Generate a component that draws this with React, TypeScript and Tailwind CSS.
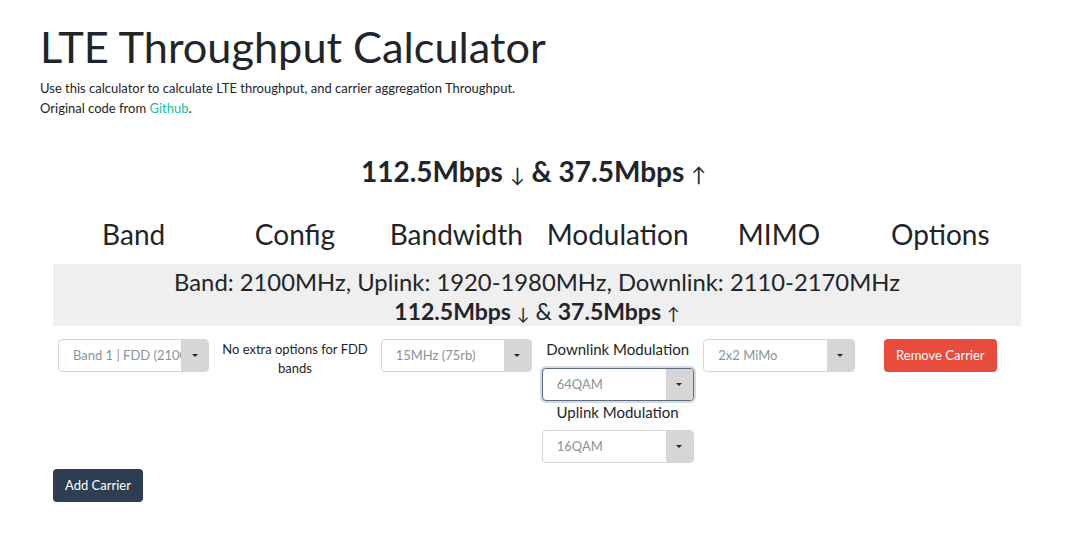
import React from "react";

function Select({ value, focus }: { value: string; focus?: boolean }) {
  return (
    <div
      className={
        "flex h-[33px] w-full overflow-hidden rounded-[4px] border bg-white " +
        (focus
          ? "border-[#5b6b7c] shadow-[0_0_0_2px_rgba(130,150,175,0.35)]"
          : "border-[#d5d5d5]")
      }
    >
      <div className="flex flex-1 items-center overflow-hidden whitespace-nowrap pl-[14px] text-[13px] text-[#8a9396]">
        {value}
      </div>
      <div className="flex w-[27px] shrink-0 items-center justify-center bg-[#d6d6d6]">
        <div className="h-0 w-0 border-x-[3px] border-t-[3px] border-x-transparent border-t-[#222]" />
      </div>
    </div>
  );
}

function Arrow({ c, size }: { c: string; size: string }) {
  return <span className={"font-normal " + size}>{c}</span>;
}

export default function App() {
  return (
    <div className="min-h-[536px] bg-white font-['Lato','Noto_Sans',sans-serif] text-[#212529]">
      <div className="px-[40px] pt-[20px]">
        <h1 className="text-[43.3px] leading-[52px] font-normal">LTE Throughput Calculator</h1>
        <p className="mt-[6px] text-[13px] leading-[20px]">
          Use this calculator to calculate LTE throughput, and carrier aggregation Throughput.
          <br />
          Original code from <span className="text-[#18bc9c]">Github</span>.
        </p>
      </div>
      <div className="mt-[36px] text-center text-[28px] font-bold leading-[34px]">
        112.5Mbps <Arrow c="↓" size="text-[20px]" /> &amp; 37.5Mbps <Arrow c="↑" size="text-[20px]" />
      </div>
      <div className="mx-[53px] mt-[25px] w-[968px]">
        <div className="grid grid-cols-6 text-center text-[28px] leading-[36px]">
          <div>Band</div>
          <div>Config</div>
          <div>Bandwidth</div>
          <div>Modulation</div>
          <div>MIMO</div>
          <div>Options</div>
        </div>
        <div className="mt-[12px] h-[62px] bg-[#efefef] pt-[4px] text-center text-[23.8px] leading-[29px]">
          <div>Band: 2100MHz, Uplink: 1920-1980MHz, Downlink: 2110-2170MHz</div>
          <div className="text-[23px]">
            <span className="font-bold">112.5Mbps</span> <Arrow c="↓" size="text-[17px]" /> &amp;{" "}
            <span className="font-bold">37.5Mbps</span> <Arrow c="↑" size="text-[17px]" />
          </div>
        </div>
        <div className="grid grid-cols-6 pt-[13px]">
          <div className="px-[5px]">
            <Select value="Band 1 | FDD (2100MHz)" />
          </div>
          <div className="pt-[1px] text-center text-[13px] leading-[19px]">
            No extra options for FDD bands
          </div>
          <div className="px-[5px]">
            <Select value="15MHz (75rb)" />
          </div>
          <div className="flex flex-col items-center px-[5px]">
            <div className="text-[15px] leading-[20px]">Downlink Modulation</div>
            <div className="mt-[9px] w-[152px]">
              <Select value="64QAM" focus />
            </div>
            <div className="text-[15px] leading-[22px]">Uplink Modulation</div>
            <div className="mt-[7px] w-[152px]">
              <Select value="16QAM" />
            </div>
          </div>
          <div className="px-[5px]">
            <Select value="2x2 MiMo" />
          </div>
          <div className="flex justify-center px-[5px]">
            <button className="h-[33px] rounded-[4px] bg-[#e74c3c] px-[12px] text-[13px] text-white">
              Remove Carrier
            </button>
          </div>
        </div>
        <button className="mt-[6px] h-[33px] rounded-[4px] bg-[#2c3e50] px-[12px] text-[13px] text-white">
          Add Carrier
        </button>
      </div>
    </div>
  );
}
